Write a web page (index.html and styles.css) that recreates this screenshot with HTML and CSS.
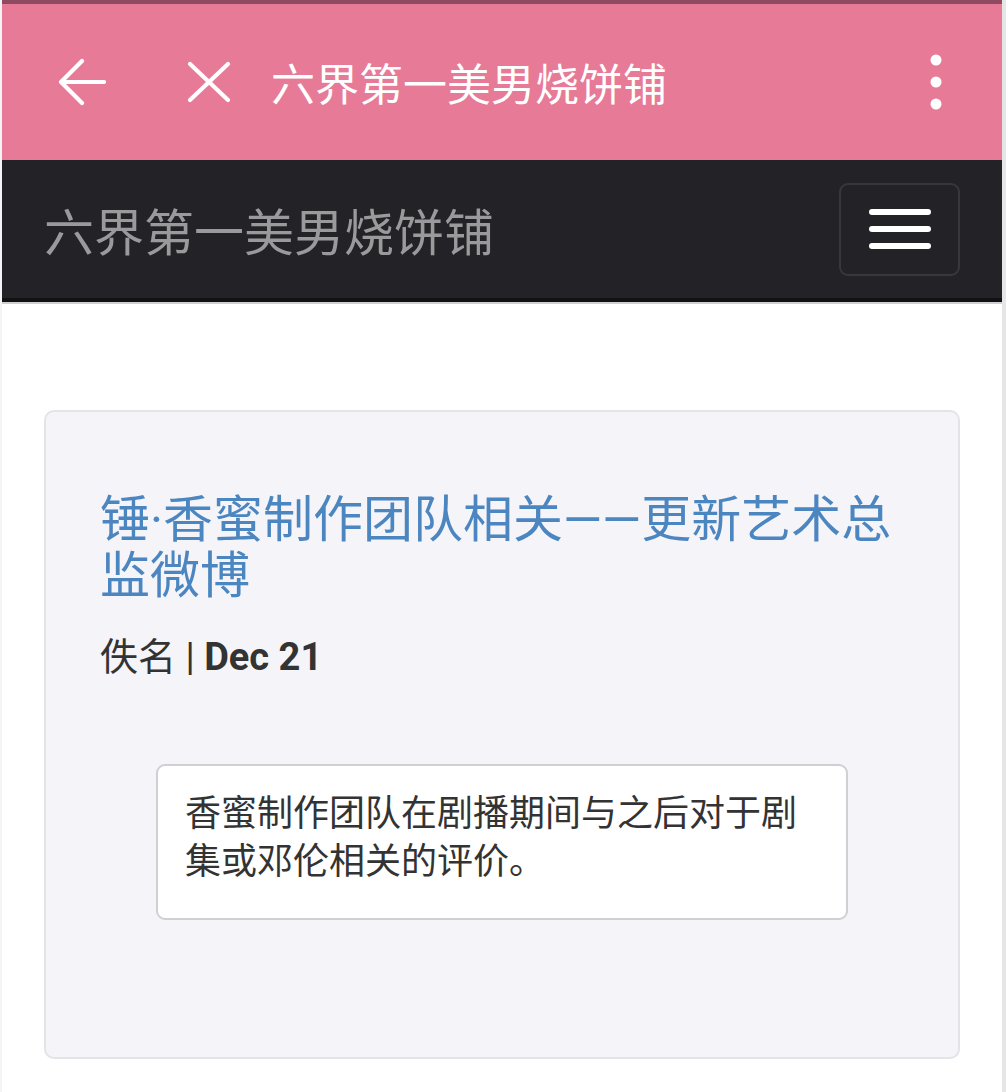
FILE: index.html
```html
<!DOCTYPE html>
<html lang="zh-CN">
<head>
<meta charset="utf-8">
<title>六界第一美男烧饼铺</title>
<link rel="stylesheet" href="styles.css">
</head>
<body>
<div class="frame">
  <div class="status-strip"></div>
  <header class="appbar">
    <svg class="icon-back" width="48" height="48" viewBox="0 0 48 48" aria-hidden="true">
      <path d="M4 24 H46 M24 3 L3 24 L24 45" fill="none" stroke="#fff" stroke-width="4.2" stroke-linecap="round" stroke-linejoin="round"/>
    </svg>
    <svg class="icon-close" width="48" height="48" viewBox="0 0 48 48" aria-hidden="true">
      <path d="M5 6 L43 42 M43 6 L5 42" fill="none" stroke="#fff" stroke-width="4.2" stroke-linecap="round"/>
    </svg>
    <span class="appbar-title">六界第一美男烧饼铺</span>
    <svg class="icon-more" width="16" height="60" viewBox="0 0 16 60" aria-hidden="true">
      <circle cx="8" cy="8" r="5.5" fill="#fff"/>
      <circle cx="8" cy="30" r="5.5" fill="#fff"/>
      <circle cx="8" cy="52" r="5.5" fill="#fff"/>
    </svg>
  </header>
  <nav class="navbar">
    <span class="brand">六界第一美男烧饼铺</span>
    <button class="toggle" type="button" aria-label="menu">
      <span class="bar"></span>
      <span class="bar"></span>
      <span class="bar"></span>
    </button>
  </nav>
  <main class="content">
    <article class="card">
      <h2 class="post-title">锤·香蜜制作团队相关——更新艺术总监微博</h2>
      <p class="meta">佚名 | <strong>Dec 21</strong></p>
      <div class="excerpt">
        <p>香蜜制作团队在剧播期间与之后对于剧集或邓伦相关的评价。</p>
      </div>
    </article>
  </main>
</div>
</body>
</html>
```

FILE: styles.css
```css
html, body {
  margin: 0;
  padding: 0;
  background: #ffffff;
}

body {
  font-family: "Roboto", "Noto Sans CJK SC", "Noto Sans", sans-serif;
}

.frame {
  width: 1000px;
  min-height: 1092px;
  border-left: 2px solid #f4f4f6;
  border-right: 4px solid #e6e6e9;
  background: #ffffff;
  box-sizing: content-box;
}

.status-strip {
  height: 4px;
  background: #8d4a60;
}

.appbar {
  height: 156px;
  background: #e77a97;
  display: flex;
  align-items: center;
  padding-left: 56px;
  padding-right: 58px;
}

.icon-back {
  flex: none;
}

.icon-close {
  flex: none;
  margin-left: 79px;
}

.appbar-title {
  margin-left: 38px;
  font-family: "Noto Sans CJK SC", sans-serif;
  font-size: 44px;
  line-height: 1;
  color: #ffffff;
  flex: 1;
}

.icon-more {
  flex: none;
}

.navbar {
  height: 138px;
  background: #232226;
  border-bottom: 4px solid #111113;
  box-shadow: 0 2px 0 #cfcfd2;
  display: flex;
  align-items: center;
  justify-content: space-between;
  padding-left: 42px;
  padding-right: 42px;
}

.brand {
  font-family: "Noto Sans CJK SC", sans-serif;
  font-size: 50px;
  line-height: 1;
  color: #9a9a9c;
}

.toggle {
  width: 121px;
  height: 93px;
  border: 2px solid #38373b;
  border-radius: 9px;
  background: transparent;
  display: flex;
  flex-direction: column;
  align-items: center;
  justify-content: center;
  gap: 11px;
  padding: 0;
}

.bar {
  display: block;
  width: 62px;
  height: 6px;
  border-radius: 3px;
  background: #ffffff;
}

.content {
  padding: 108px 42px 34px 42px;
}

.card {
  background: #f5f4f8;
  border: 2px solid #e4e4e7;
  border-radius: 10px;
  padding: 80px 56px 137px 54px;
}

.post-title {
  margin: 0;
  font-family: "Roboto", "Noto Sans CJK SC", sans-serif;
  font-weight: 400;
  font-size: 50px;
  line-height: 56px;
  color: #4c86c0;
}

.meta {
  margin: 32px 0 0 0;
  font-size: 38px;
  line-height: 42px;
  color: #333333;
}

.meta strong {
  font-weight: 700;
}

.excerpt {
  margin: 86px 0 0 56px;
  width: 692px;
  box-sizing: border-box;
  background: #ffffff;
  border: 2px solid #d0d0d4;
  border-radius: 9px;
  padding: 20px 28px 36px 27px;
}

.excerpt p {
  margin: 0;
  font-family: "Noto Sans CJK SC", sans-serif;
  font-size: 36px;
  line-height: 48px;
  color: #333333;
}
```
